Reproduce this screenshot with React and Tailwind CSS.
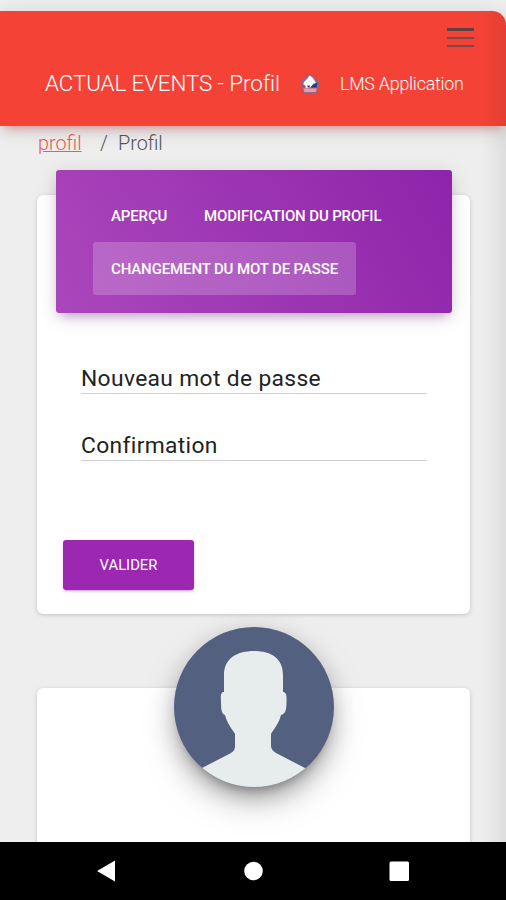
import React, { useState } from "react";

const tabs = [
  { id: "apercu", label: "Aperçu", width: "w-[93px]" },
  { id: "modification", label: "Modification du profil", width: "w-[214px]" },
  { id: "password", label: "Changement du mot de passe", width: "w-[263px]" },
];

const ClubLogo = () => (
  <svg viewBox="0 0 22 22" className="w-[22px] h-[22px]">
    <path d="M11 1 L20.500 8.500 L17.500 20.500 H4.500 L1.500 8.500 Z" fill="#8d6a92" stroke="#b3586a" strokeWidth="0.8" />
    <path d="M10.500 2.500 L13.500 4.500 L17 10 L14.500 10.500 L12 14 L8 15.500 L4 13 L5 9 L8 6 Z" fill="#fff" />
    <path d="M3.500 11 L7 13 L6 15 H4 Z" fill="#d7434f" />
    <path d="M13 12.500 L18.500 9.500 L17.500 14.500 H11.500 Z" fill="#27397c" />
    <path d="M8.500 12.500 H11 L10.500 14.500 H8.500 Z" fill="#27397c" />
    <path d="M4.500 15.500 H17.500 L16.800 19 H5.300 Z" fill="#ef9aa2" />
  </svg>
);

const Avatar = () => (
  <div className="relative z-10 w-40 h-40 mx-auto rounded-full overflow-hidden bg-[#54607f] shadow-[0_16px_38px_-12px_rgba(0,0,0,0.56),0_4px_25px_0_rgba(0,0,0,0.12),0_8px_10px_-5px_rgba(0,0,0,0.2)]">
    <svg viewBox="0 0 160 160" className="w-full h-full">
      <path
        d="M80 24 C98 24 109 32 109 48 V65 C112 65 113 68 112.500 75 C112.500 84 111 87 107 88 C105 96 100 102 97 107 V119 C97 122 99 124 102 126 L131 141 V160 H28 V141 L57 126 C60 124 61 122 61 119 V107 C58 102 53 96 51 88 C48 87 47 84 47 75 C46.500 68 47 65 50 65 V48 C50 32 62 24 80 24 Z"
        fill="#e7ecec"
      />
    </svg>
  </div>
);

const Header = () => (
  <header className="relative h-[115px] shrink-0 bg-[#f44336] text-white rounded-tr-[14px] shadow-[0_4px_20px_0_rgba(0,0,0,0.14),0_7px_10px_-5px_rgba(244,67,54,0.4)]">
    <div className="flex justify-end pt-[17px] pr-8">
      <button aria-label="Menu" className="flex flex-col gap-[5px] w-[27px]">
        <span className="h-[3px] w-full bg-[#5f4045]" />
        <span className="h-[2px] w-full mt-px bg-[#79494b]" />
        <span className="h-[2px] w-full mt-px bg-[#79494b]" />
      </button>
    </div>
    <div className="flex items-center h-8 mt-[21px] pl-[45px] whitespace-nowrap">
      <span className="w-[254px] text-[22.400px] font-light tracking-[-0.1px]">ACTUAL EVENTS - Profil</span>
      <ClubLogo />
      <span className="ml-[19px] text-[17.800px] font-light tracking-[-0.2px]">LMS Application</span>
    </div>
  </header>
);

const PasswordCard = () => {
  const [active, setActive] = useState("password");
  const [newPassword, setNewPassword] = useState("");
  const [confirmPassword, setConfirmPassword] = useState("");

  const inputStyle =
    "block w-full h-8 border-b border-[#cfcfcf] bg-transparent pt-0.5 text-[22.800px] leading-[30px] tracking-[0.35px] text-[#222] placeholder:text-[#222] placeholder:opacity-100 focus:outline-none";

  return (
    <div className="mt-[35px] h-[419px] shrink-0 bg-white rounded-md shadow-[0_1px_4px_0_rgba(0,0,0,0.18)]">
      <div className="-mt-[25px] ml-[19px] w-[396px] h-[143px] flex flex-wrap content-start pl-[37px] pt-[19px] rounded-[3px] bg-linear-[60deg,#ab47bc,#8e24aa] shadow-[0_4px_20px_0_rgba(0,0,0,0.14),0_7px_10px_-5px_rgba(156,39,176,0.4)]">
        {tabs.map((tab) => (
          <button
            key={tab.id}
            onClick={() => setActive(tab.id)}
            className={`${tab.width} ${active === tab.id ? "bg-white/20" : ""} h-[53px] pl-[18px] pt-0.5 text-left text-[15px] font-medium tracking-[-0.13px] uppercase whitespace-nowrap text-white rounded-[3px]`}
          >
            {tab.label}
          </button>
        ))}
      </div>
      <form onSubmit={(e) => e.preventDefault()} className="pt-[49px] pl-11 pr-[43px]">
        <input className={inputStyle} placeholder="Nouveau mot de passe" value={newPassword} onChange={(e) => setNewPassword(e.target.value)} />
        <input className={`${inputStyle} mt-[35px]`} placeholder="Confirmation" value={confirmPassword} onChange={(e) => setConfirmPassword(e.target.value)} />
        <button type="submit" className="mt-[79px] -ml-[18px] w-[131px] h-[50px] rounded-[3px] bg-[#9c27b0] text-white text-[14.800px] uppercase shadow-[0_2px_2px_0_rgba(156,39,176,0.14),0_3px_1px_-2px_rgba(156,39,176,0.2),0_1px_5px_0_rgba(156,39,176,0.12)]">
          Valider
        </button>
      </form>
    </div>
  );
};

const NavigationBar = () => (
  <nav className="relative z-20 h-[58px] shrink-0 bg-black">
    <svg viewBox="0 0 506 58" className="w-full h-full" fill="#fff">
      <path d="M97 29 L115 18.500 V39.500 Z" />
      <circle cx="253.500" cy="29" r="9.300" />
      <rect x="389.500" y="19.500" width="19.500" height="19.500" rx="1.500" />
    </svg>
  </nav>
);

const App = () => {
  return (
    <div className="w-[506px] h-[900px] flex flex-col overflow-hidden bg-[#eeeeee] font-[Roboto,sans-serif]">
      <div className="relative flex-1 min-h-0 flex flex-col pt-[11px] overflow-hidden">
        <Header />
        <main className="flex-1 min-h-0 flex flex-col pl-[37px] pr-9">
          <div className="flex items-center h-[34px] pt-0.5 pl-px shrink-0 text-[19.800px] font-light text-[#555]">
            <a href="#profil" className="w-[62px] text-[#ef5b55] underline">profil</a>
            <span className="w-[18px]">/</span>
            <span>Profil</span>
          </div>
          <PasswordCard />
          <div className="mt-[74px] h-[220px] shrink-0 bg-white rounded-md shadow-[0_1px_4px_0_rgba(0,0,0,0.18)]">
            <div className="-mt-[61px]">
              <Avatar />
            </div>
          </div>
        </main>
        <div className="absolute bottom-0 right-0 top-[11px] w-6 rounded-tr-[14px] pointer-events-none bg-linear-to-l from-black/7 to-transparent" />
      </div>
      <NavigationBar />
    </div>
  );
};

export default App;
